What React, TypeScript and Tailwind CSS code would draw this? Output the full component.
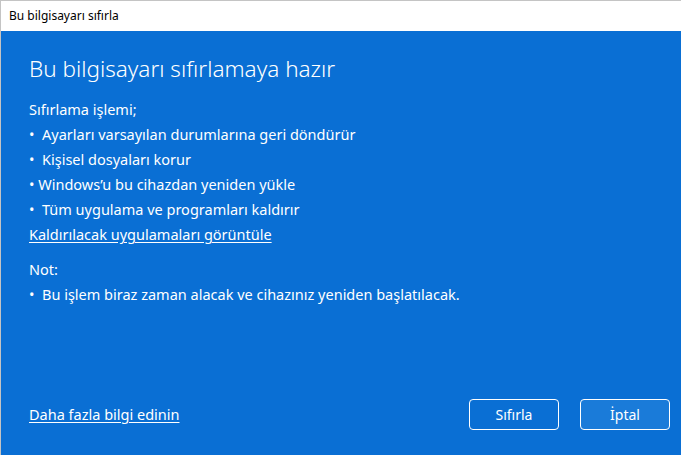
export default function App() {
  const font = { fontFamily: '"Noto Sans", "Open Sans", sans-serif' };
  return (
    <div className="w-[681px] h-[455px] flex flex-col bg-white border-t border-l border-[#c4c4c4] overflow-hidden" style={font}>
      <div className="h-[30px] flex items-center pl-[8px] text-[12px] text-black">Bu bilgisayarı sıfırla</div>
      <div className="flex-1 bg-[#0a6fd4] text-white flex flex-col pl-[28px] pr-[11px]">
        <div className="pt-[22px] text-[22.5px] leading-[32px] font-light">Bu bilgisayarı sıfırlamaya hazır</div>
        <div className="mt-[12px] text-[14.5px] leading-[25px] flex flex-col">
          <div>Sıfırlama işlemi;</div>
          <div className="whitespace-pre">•  Ayarları varsayılan durumlarına geri döndürür</div>
          <div className="whitespace-pre">•  Kişisel dosyaları korur</div>
          <div className="whitespace-pre">• Windows’u bu cihazdan yeniden yükle</div>
          <div className="whitespace-pre">•  Tüm uygulama ve programları kaldırır</div>
          <div className="underline underline-offset-2">Kaldırılacak uygulamaları görüntüle</div>
          <div className="mt-[10px]">Not:</div>
          <div className="whitespace-pre">•  Bu işlem biraz zaman alacak ve cihazınız yeniden başlatılacak.</div>
        </div>
        <div className="flex-1" />
        <div className="flex items-center justify-between pb-[25px]">
          <span className="text-[14.5px] underline underline-offset-2">Daha fazla bilgi edinin</span>
          <div className="flex gap-[21px]">
            <button className="w-[90px] h-[31px] border-[1.5px] border-white rounded-[4px] text-[14px] text-white">Sıfırla</button>
            <button className="w-[90px] h-[31px] border-[1.5px] border-white rounded-[4px] text-[14px] text-white bg-[#1a7bd9]">İptal</button>
          </div>
        </div>
      </div>
    </div>
  );
}
